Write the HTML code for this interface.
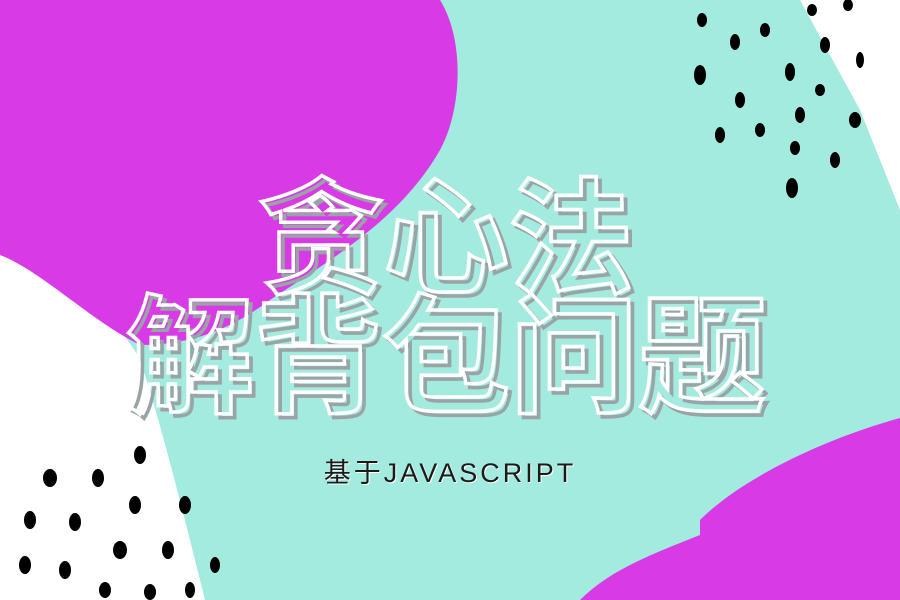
<!DOCTYPE html>
<html><head><meta charset="utf-8"><style>
html,body{margin:0;padding:0;width:900px;height:600px;overflow:hidden;background:#a3ebdf}
.t{position:absolute;left:0;width:900px;text-align:center;font-family:"Noto Sans CJK SC","WenQuanYi Zen Hei",sans-serif;font-weight:700;line-height:1;color:transparent;white-space:nowrap}
.w{-webkit-text-stroke:3.5px #fff}
.g{-webkit-text-stroke:3.5px #9aa3a6}
.sub{position:absolute;left:0;width:900px;text-align:center;top:451px;font-family:"Liberation Sans","Noto Sans CJK SC",sans-serif;font-size:27px;letter-spacing:3px;color:#1b1b1b;text-shadow:1px 1px 0 #fff}
</style></head><body>
<svg width="900" height="600" style="position:absolute;left:0;top:0">
<polygon points="800,0 900,0 900,210 860,110" fill="#fff"/>
<path d="M0,250 C60,270 120,320 140,360 C160,420 180,500 205,600 L0,600 Z" fill="#fff"/>
<path d="M0,0 L440,0 C465,40 462,110 440,150 C400,220 330,260 270,300 C230,330 190,345 140,345 C90,320 40,270 0,255 Z" fill="#d83ae6"/>
<path d="M700,520 C740,480 820,440 900,418 L900,600 L580,600 C610,570 650,555 700,535 Z" fill="#d83ae6"/>
<g fill="#000">
<ellipse cx="702" cy="20" rx="5" ry="7"/><ellipse cx="735" cy="42" rx="5" ry="8"/><ellipse cx="765" cy="30" rx="5" ry="7"/>
<ellipse cx="700" cy="75" rx="6" ry="10"/><ellipse cx="740" cy="100" rx="5" ry="8"/><ellipse cx="790" cy="72" rx="5" ry="9"/>
<ellipse cx="760" cy="130" rx="5" ry="7"/><ellipse cx="720" cy="135" rx="5" ry="8"/><ellipse cx="800" cy="115" rx="5" ry="8"/>
<ellipse cx="825" cy="45" rx="5" ry="8"/><ellipse cx="820" cy="90" rx="5" ry="6"/><ellipse cx="855" cy="120" rx="6" ry="8"/>
<ellipse cx="795" cy="148" rx="5" ry="7"/><ellipse cx="835" cy="160" rx="5" ry="8"/><ellipse cx="792" cy="188" rx="6" ry="10"/>
<ellipse cx="860" cy="60" rx="4" ry="8"/><ellipse cx="812" cy="10" rx="5" ry="6"/><ellipse cx="848" cy="5" rx="5" ry="6"/>
<ellipse cx="140" cy="455" rx="6" ry="9"/><ellipse cx="50" cy="478" rx="7" ry="9"/><ellipse cx="98" cy="478" rx="6" ry="9"/>
<ellipse cx="135" cy="505" rx="6" ry="9"/><ellipse cx="185" cy="505" rx="6" ry="9"/><ellipse cx="30" cy="520" rx="6" ry="9"/>
<ellipse cx="75" cy="522" rx="6" ry="9"/><ellipse cx="120" cy="550" rx="7" ry="9"/><ellipse cx="168" cy="550" rx="6" ry="9"/>
<ellipse cx="25" cy="565" rx="6" ry="9"/><ellipse cx="65" cy="570" rx="6" ry="9"/><ellipse cx="105" cy="590" rx="6" ry="8"/>
<ellipse cx="150" cy="592" rx="6" ry="8"/><ellipse cx="190" cy="590" rx="5" ry="8"/><ellipse cx="215" cy="565" rx="5" ry="8"/>
</g>
</svg>
<div class="t g" style="top:170px;font-size:125px">贪心法</div>
<div class="t w" style="top:166px;left:-4px;font-size:125px">贪心法</div>
<div class="t g" style="top:287px;font-size:128px">解背包问题</div>
<div class="t w" style="top:283px;left:-4px;font-size:128px">解背包问题</div>
<div class="sub">基于JAVASCRIPT</div>
</body></html>
